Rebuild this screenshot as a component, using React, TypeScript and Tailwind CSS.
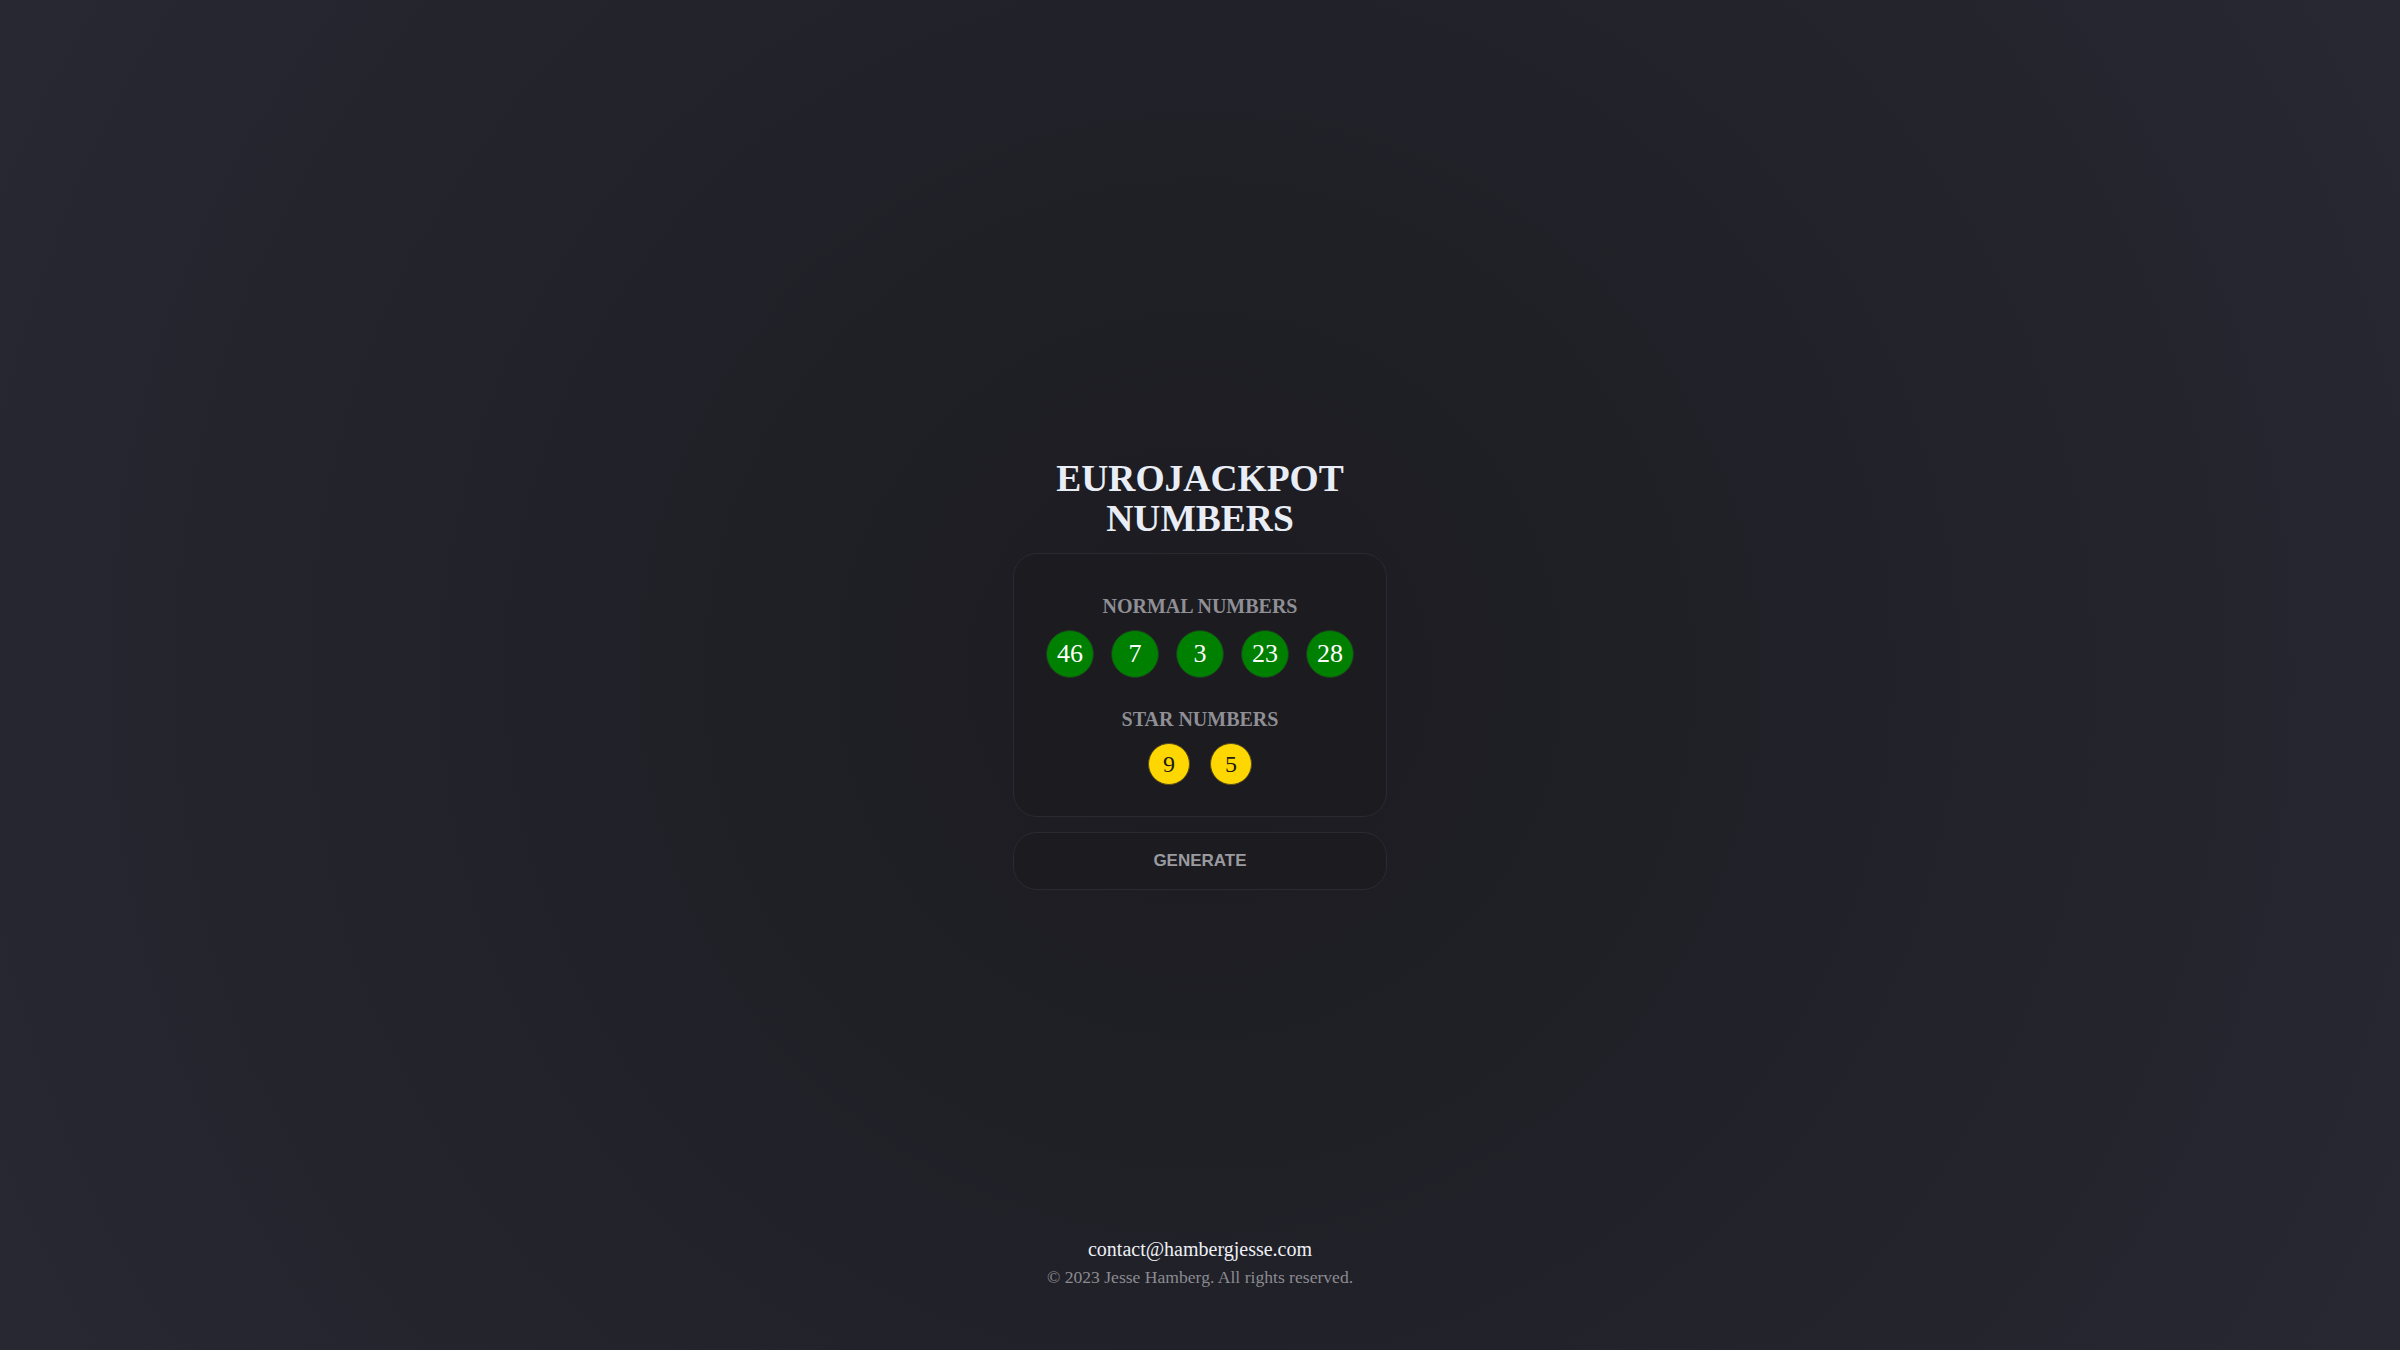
const normal = [46, 7, 3, 23, 28];
const stars = [9, 5];

export default function App() {
  return (
    <div className="flex min-h-screen flex-col bg-[radial-gradient(circle_at_center,#1b1b20_0%,#282833_100%)] font-['Liberation_Serif',serif]">
      <main className="flex flex-1 items-center justify-center pt-[114px]">
        <div className="flex w-[374px] flex-col items-center">
          <h1 className="text-center text-[37.5px] font-bold leading-[40px] text-[#e9edf6]">
            EUROJACKPOT NUMBERS
          </h1>

          <div className="mt-[14px] flex w-full flex-col items-center rounded-3xl border border-[#2a2a31] bg-[#1b1b20] pt-[40px] pb-[31px]">
            <h2 className="text-[20px] font-bold leading-[24px] text-[#8f8f95]">NORMAL NUMBERS</h2>
            <div className="mt-3 flex gap-[17px]">
              {normal.map((n) => (
                <div
                  key={n}
                  className="flex h-12 w-12 items-center justify-center rounded-full border border-[#1f3a1f] bg-[#008000] text-[26px] leading-none text-white"
                >
                  {n}
                </div>
              ))}
            </div>

            <h2 className="mt-[29px] text-[20px] font-bold leading-[24px] text-[#8f8f95]">STAR NUMBERS</h2>
            <div className="mt-3 flex gap-5">
              {stars.map((n) => (
                <div
                  key={n}
                  className="flex h-[42px] w-[42px] items-center justify-center rounded-full border border-[#5a4e1a] bg-[#ffd700] text-[24px] leading-none text-[#1a1a1a]"
                >
                  {n}
                </div>
              ))}
            </div>
          </div>

          <button className="mt-[15px] h-[58px] w-full rounded-3xl border border-[#2a2a31] bg-[#1b1b20] font-['Liberation_Sans',sans-serif] text-[17px] font-bold text-[#9a9a9f]">
            GENERATE
          </button>
        </div>
      </main>

      <footer className="flex flex-col items-center pb-[59px]">
        <a href="#" className="text-[20px] leading-[28px] text-[#eef0f5]">
          contact@hambergjesse.com
        </a>
        <p className="text-[17.6px] leading-[28px] text-[#8b8b91]">© 2023 Jesse Hamberg. All rights reserved.</p>
      </footer>
    </div>
  );
}
